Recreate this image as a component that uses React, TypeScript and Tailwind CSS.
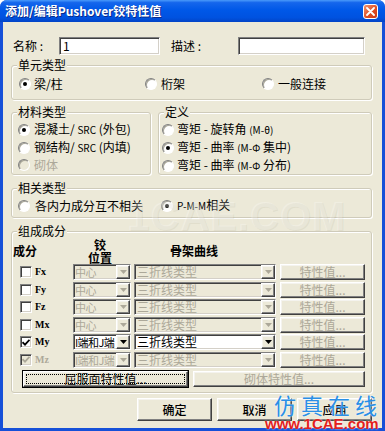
import React from 'react';

const font = "font-['Noto_Sans_CJK_SC','Liberation_Sans',sans-serif]";

const sunken =
  'border border-t-[#808080] border-l-[#808080] border-r-white border-b-white shadow-[inset_1px_1px_0_#404040,inset_-1px_-1px_0_#d4d0c8]';
const raised =
  'border border-t-white border-l-white border-r-[#404040] border-b-[#404040] shadow-[inset_-1px_-1px_0_#808080,inset_1px_1px_0_#f4f3ee]';

function Radio({ checked, disabled }: { checked?: boolean; disabled?: boolean }) {
  return (
    <span
      className={`flex h-[12px] w-[12px] shrink-0 items-center justify-center rounded-full border border-t-[#808080] border-l-[#808080] border-r-white border-b-white shadow-[inset_1px_1px_0_#a8a698] ${
        disabled ? 'bg-[#ECE9D8]' : 'bg-white'
      }`}
    >
      {checked && <span className="h-[4px] w-[4px] rounded-full bg-black" />}
    </span>
  );
}

function Check({ checked, disabled }: { checked?: boolean; disabled?: boolean }) {
  return (
    <span className={`flex h-[12px] w-[12px] shrink-0 items-center justify-center ${sunken} ${disabled ? 'bg-[#ECE9D8]' : 'bg-white'}`}>
      {checked && (
        <svg width="8" height="7" viewBox="0 0 8 7">
          <path d="M0.5 3.2 L3 5.6 L7.5 0.8" fill="none" stroke={disabled ? '#ACA899' : '#000'} strokeWidth="1.8" />
        </svg>
      )}
    </span>
  );
}

function Arrow({ disabled }: { disabled?: boolean }) {
  return (
    <span className={`flex w-[14px] shrink-0 items-center justify-center bg-[#ECE9D8] ${raised}`}>
      <svg width="7" height="4" viewBox="0 0 7 4">
        <path d="M0 0 H7 L3.5 4 Z" fill={disabled ? '#ACA899' : '#000'} />
      </svg>
    </span>
  );
}

function Group({ label, className, children }: { label: string; className: string; children: React.ReactNode }) {
  return (
    <div className={`relative rounded-[3px] border border-[#CFCBBA] shadow-[inset_1px_1px_0_#fff,1px_1px_0_#fff] ${className}`}>
      <span className="absolute -top-[8px] left-[5px] bg-[#ECE9D8] px-[1px] leading-[14px]">{label}</span>
      {children}
    </div>
  );
}

const rows = [
  { name: 'Fx', pos: '中心' },
  { name: 'Fy', pos: '中心' },
  { name: 'Fz', pos: '中心' },
  { name: 'Mx', pos: '中心' },
  { name: 'My', pos: 'I端和J端', on: true },
  { name: 'Mz', pos: 'I端和J端', greyChecked: true },
];

export default function App() {
  return (
    <div className={`h-[431px] w-[385px] overflow-hidden rounded-t-[7px] bg-[#1650D8] text-[12px] leading-[14px] text-black ${font}`}>
      {/* title bar */}
      <div className="flex h-[22px] items-center justify-between bg-[linear-gradient(to_bottom,#4A9AFA_0%,#1566EC_12%,#0058E8_45%,#0052E0_80%,#0344C6_100%)] pl-[5px] pr-[7px]">
        <span className="text-[12px] font-bold text-white [text-shadow:1px_1px_0_#0a2a8a]">添加/编辑Pushover铰特性值</span>
        <span className="flex h-[15px] w-[15px] items-center justify-center rounded-[3px] border border-white bg-[linear-gradient(135deg,#F29470,#DE4A1F_60%,#C8391A)]">
          <svg width="9" height="9" viewBox="0 0 9 9">
            <path d="M1 1 L8 8 M8 1 L1 8" stroke="#fff" strokeWidth="1.8" strokeLinecap="round" />
          </svg>
        </span>
      </div>

      {/* dialog body */}
      <div className="relative mx-[3px] h-[406px] bg-[#ECE9D8]">
        {/* name row */}
        <div className="flex items-center pl-[10px] pt-[15px]">
          <span className="w-[46px]">名称 :</span>
          <div className={`flex h-[18px] w-[101px] items-center bg-white pl-[3px] ${sunken}`}>1</div>
          <span className="ml-[11px] w-[67px]">描述 :</span>
          <div className={`h-[18px] w-[127px] bg-white ${sunken}`} />
        </div>

        <Group label="单元类型" className="ml-[8px] mt-[10px] h-[35px] w-[361px]">
          <div className="flex items-center pl-[7px] pt-[11px]">
            <div className="flex w-[126px] items-center gap-[3px]"><Radio checked /><span>梁/柱</span></div>
            <div className="flex w-[117px] items-center gap-[4px]"><Radio /><span>桁架</span></div>
            <div className="flex items-center gap-[4px]"><Radio /><span>一般连接</span></div>
          </div>
        </Group>

        <div className="ml-[8px] mt-[12px] flex w-[361px] gap-[7px]">
          <Group label="材料类型" className="h-[63px] w-[140px]">
            <div className="flex flex-col gap-[3px] pl-[6px] pt-[9px]">
              <div className="flex items-center gap-[4px]"><Radio checked /><span>混凝土/ <span className="text-[10px]">SRC</span> (外包)</span></div>
              <div className="flex items-center gap-[4px]"><Radio /><span>钢结构/ <span className="text-[10px]">SRC</span> (内填)</span></div>
              <div className="flex items-center gap-[4px] text-[#ACA899]"><Radio disabled /><span>砌体</span></div>
            </div>
          </Group>
          <Group label="定义" className="h-[63px] w-[214px]">
            <div className="flex flex-col gap-[3px] pl-[3px] pt-[9px]">
              <div className="flex items-center gap-[3px]"><Radio /><span>弯矩 - 旋转角 <span className="text-[10px]">(M-θ)</span></span></div>
              <div className="flex items-center gap-[3px]"><Radio checked /><span>弯矩 - 曲率 <span className="text-[10px]">(M-Φ</span> 集中)</span></div>
              <div className="flex items-center gap-[3px]"><Radio /><span>弯矩 - 曲率 <span className="text-[10px]">(M-Φ</span> 分布)</span></div>
            </div>
          </Group>
        </div>

        <Group label="相关类型" className="ml-[8px] mt-[13px] h-[30px] w-[361px]">
          <div className="flex items-center pl-[6px] pt-[9px]">
            <div className="flex w-[143px] items-center gap-[5px]"><Radio /><span>各内力成分互不相关</span></div>
            <div className="flex items-center gap-[4px]"><Radio checked /><span><span className="text-[10px]">P-M-M</span>相关</span></div>
          </div>
        </Group>

        <Group label="组成成分" className="ml-[8px] mt-[13px] h-[162px] w-[361px]">
          <div className="pt-[6px]">
            <div className="flex h-[26px] items-center font-bold">
              <span className="ml-[1px] w-[24px]">成分</span>
              <div className="ml-[51px] flex w-[24px] flex-col items-center leading-[13px]">
                <span>铰</span>
                <span>位置</span>
              </div>
              <span className="ml-[58px]">骨架曲线</span>
            </div>

            <div className="flex flex-col gap-[1.5px]">
              {rows.map((r) => {
                const dis = !r.on;
                return (
                  <div key={r.name} className="flex h-[16px] items-center">
                    <span className="ml-[8px]"><Check checked={r.on || r.greyChecked} disabled={r.greyChecked} /></span>
                    <span className={`ml-[3px] w-[38px] font-['Liberation_Serif',serif] text-[10px] font-bold ${r.greyChecked ? 'text-[#ACA899]' : ''}`}>{r.name}</span>
                    <div className={`flex h-[16px] w-[58px] ${sunken} ${dis ? 'bg-[#ECE9D8] text-[#ACA899]' : 'bg-white'}`}>
                      <span className="flex-1 whitespace-nowrap pl-[1px] text-[11px] leading-[14px] tracking-[-0.6px]">{r.pos}</span>
                      <Arrow disabled={dis} />
                    </div>
                    <div className={`ml-[3px] flex h-[16px] w-[142px] ${sunken} ${dis ? 'bg-[#ECE9D8] text-[#ACA899]' : 'bg-white'}`}>
                      <span className="flex-1 pl-[2px] leading-[14px]">三折线类型</span>
                      <Arrow disabled={dis} />
                    </div>
                    <div className={`ml-[4px] flex h-[16px] w-[85px] items-center justify-center bg-[#ECE9D8] text-[#ACA899] ${raised}`}>特性值...</div>
                  </div>
                );
              })}
            </div>

            <div className="mt-[3.5px] flex">
              <div className="ml-[11px] flex h-[16px] w-[165px] items-center justify-center bg-[#ECE9D8] outline outline-1 outline-black">
                <div className={`flex h-full w-full items-center justify-center p-[2px] ${raised}`}>
                  <span className="flex h-full w-full items-center justify-center border border-dotted border-black">屈服面特性值...</span>
                </div>
              </div>
              <div className={`ml-[5px] flex h-[16px] w-[172px] items-center justify-center bg-[#ECE9D8] text-[#ACA899] ${raised}`}>砌体特性值...</div>
            </div>
          </div>
        </Group>

        {/* dialog buttons */}
        <div className="ml-[134px] mt-[5px] flex gap-[5px]">
          <div className={`flex h-[23px] w-[75px] items-center justify-center bg-[#ECE9D8] font-medium ${raised}`}>确定</div>
          <div className={`flex h-[23px] w-[75px] items-center justify-center bg-[#ECE9D8] font-medium ${raised}`}>取消</div>
          <div className={`flex h-[23px] w-[75px] items-center justify-center bg-[#ECE9D8] font-medium ${raised}`}>应用</div>
        </div>

        {/* watermark */}
        <div className="pointer-events-none absolute left-[124px] top-[174px] whitespace-nowrap font-['Liberation_Sans',sans-serif] text-[40px] font-bold leading-none tracking-[1px] text-white/25 [text-shadow:1px_1px_0_rgba(150,145,120,0.12)]">
          1CAE.COM
        </div>
        <div className="pointer-events-none absolute left-[271px] top-[370px] flex w-[112px] flex-col items-start whitespace-nowrap">
          <span className="text-[22px] leading-[24px] tracking-[5px] text-[#2A8FE6] [text-shadow:0_0_2px_#fff]">仿真在线</span>
          <span className="-ml-[9px] font-['Liberation_Sans',sans-serif] text-[15px] font-bold leading-[15px] text-[#E3211C] [text-shadow:0_0_2px_#fff]">www.1CAE.com</span>
        </div>
      </div>
    </div>
  );
}
